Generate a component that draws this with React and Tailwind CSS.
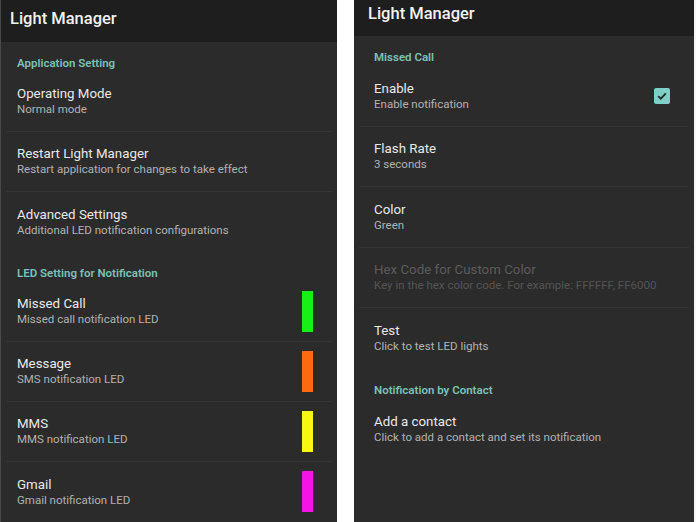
import React from "react";

const leftItems = [
  { type: "section", label: "Application Setting" },
  { title: "Operating Mode", sub: "Normal mode" },
  { title: "Restart Light Manager", sub: "Restart application for changes to take effect" },
  { title: "Advanced Settings", sub: "Additional LED notification configurations", last: true },
  { type: "section", label: "LED Setting for Notification" },
  { title: "Missed Call", sub: "Missed call notification LED", led: "bg-[#16f016]" },
  { title: "Message", sub: "SMS notification LED", led: "bg-[#ff6a10]" },
  { title: "MMS", sub: "MMS notification LED", led: "bg-[#f7f712]" },
  { title: "Gmail", sub: "Gmail notification LED", led: "bg-[#f514e8]", last: true },
];

const rightItems = [
  { type: "section", label: "Missed Call" },
  { title: "Enable", sub: "Enable notification", check: true },
  { title: "Flash Rate", sub: "3 seconds" },
  { title: "Color", sub: "Green" },
  { title: "Hex Code for Custom Color", sub: "Key in the hex color code. For example: FFFFFF, FF6000", disabled: true },
  { title: "Test", sub: "Click to test LED lights", last: true },
  { type: "section", label: "Notification by Contact" },
  { title: "Add a contact", sub: "Click to add a contact and set its notification", last: true },
];

function Section({ label, pad }) {
  return (
    <div className={`h-[30px] flex items-end pb-[2px] ${pad}`}>
      <span className="text-[11.5px] font-semibold text-[#7cc1b6] leading-[14px]">{label}</span>
    </div>
  );
}

function Row({ item, pad }) {
  return (
    <div className="h-[60.5px] flex flex-col">
      <div className={`flex-1 flex items-center justify-between ${pad} pr-[24px]`}>
        <div className="flex flex-col">
          <span className={`text-[13.3px] leading-[17px] ${item.disabled ? "text-[#5b5b5b]" : "text-[#e9e9e9]"}`}>
            {item.title}
          </span>
          <span className={`text-[11.5px] leading-[15px] ${item.disabled ? "text-[#545454]" : "text-[#b2b2b2]"}`}>
            {item.sub}
          </span>
        </div>
        {item.led && <div className={`w-[11px] h-[41px] ${item.led}`}></div>}
        {item.check && (
          <div className="w-[16px] h-[16px] rounded-[2px] bg-[#7fcfc6] flex items-center justify-center">
            <svg viewBox="0 0 12 12" className="w-[12px] h-[12px]">
              <path d="M2.2 6.2 L4.8 8.7 L9.8 3.4" fill="none" stroke="#1f2b2a" strokeWidth="1.8" />
            </svg>
          </div>
        )}
      </div>
      {!item.last && <div className="h-px mx-[5px] bg-[#343434]"></div>}
    </div>
  );
}

function Panel({ items, headerH, width, titleClass, pad, extra }) {
  return (
    <div className={`${width} h-full bg-[#2b2b2b] flex flex-col overflow-hidden ${extra}`}>
      <div className={`${headerH} bg-[#1e1e1e] flex items-center ${titleClass}`}>
        <span className="text-[16.5px] font-medium text-[#f2f2f2]">Light Manager</span>
      </div>
      {items.map((it, i) =>
        it.type === "section" ? (
          <Section key={i} label={it.label} pad={pad} />
        ) : (
          <Row key={i} item={it} pad={pad} />
        )
      )}
    </div>
  );
}

export default function App() {
  return (
    <div className="w-[696px] h-[522px] bg-[#f6f6f6] flex font-['Roboto',sans-serif] overflow-hidden">
      <Panel
        items={leftItems}
        headerH="h-[42px]"
        width="w-[337px]"
        titleClass="pl-[9px] pb-[4px]"
        pad="pl-[16px]"
        extra="border-l border-[#4a4a4a]"
      />
      <div className="w-[17px] bg-white"></div>
      <Panel
        items={rightItems}
        headerH="h-[36px]"
        width="w-[340px]"
        titleClass="pl-[14px] pb-[8px]"
        pad="pl-[20px]"
        extra=""
      />
    </div>
  );
}
